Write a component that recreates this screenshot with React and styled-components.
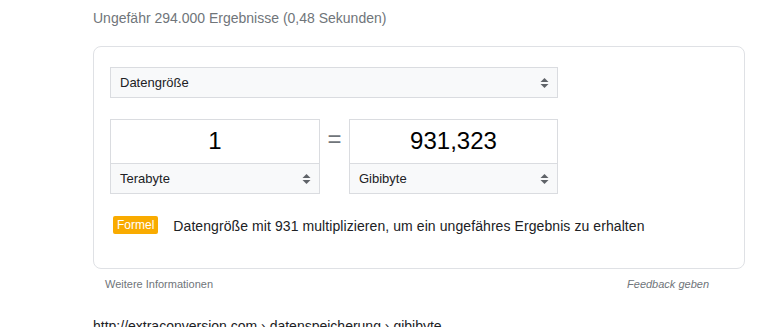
import styled, { createGlobalStyle } from "styled-components";

const Global = createGlobalStyle`
  body {
    margin: 0;
    background: #fff;
    font-family: Arial, "Liberation Sans", sans-serif;
    color: #202124;
  }
`;

const Page = styled.div`
  padding: 8px 0 0 93px;
  width: 652px;
`;

const Stats = styled.div`
  font-size: 14px;
  line-height: 20px;
  color: #70757a;
`;

const Card = styled.div`
  margin-top: 18px;
  border: 1px solid #dfe1e5;
  border-radius: 8px;
  padding: 20px 16px 35px 16px;
  height: 166px;
`;

const Select = styled.div`
  display: flex;
  align-items: center;
  justify-content: space-between;
  box-sizing: border-box;
  width: ${(p) => p.width || "100%"};
  height: ${(p) => p.height || "31px"};
  padding: 0 8px 0 9px;
  background: #f8f9fa;
  border: 1px solid #dadce0;
  font-size: 13px;
  color: #202124;
`;

const Arrows = () => (
  <svg width="9" height="12" viewBox="0 0 9 12">
    <path d="M0.5 5 L4.5 1 L8.5 5 Z" fill="#5f6368" />
    <path d="M0.5 7 L4.5 11 L8.5 7 Z" fill="#5f6368" />
  </svg>
);

const Row = styled.div`
  display: flex;
  align-items: flex-start;
  margin-top: 21px;
  width: 448px;
`;

const Unit = styled.div`
  display: flex;
  flex-direction: column;
  width: ${(p) => p.width};
`;

const Value = styled.div`
  box-sizing: border-box;
  height: 44px;
  border: 1px solid #dadce0;
  border-bottom: none;
  display: flex;
  align-items: center;
  justify-content: center;
  font-size: 24px;
  color: #000;
  padding-bottom: 1px;
`;

const Equals = styled.div`
  width: 29px;
  height: 44px;
  display: flex;
  align-items: center;
  justify-content: center;
  font-size: 24px;
  color: #70757a;
  padding-bottom: 4px;
  box-sizing: border-box;
`;

const Formula = styled.div`
  display: flex;
  align-items: center;
  margin-top: 21px;
  margin-left: 3px;
`;

const Badge = styled.span`
  background: #f9ab00;
  color: #fff;
  font-size: 12px;
  line-height: 18px;
  padding: 0 4px;
  border-radius: 2px;
  margin-right: 15px;
`;

const FormulaText = styled.span`
  font-size: 14px;
  letter-spacing: 0.08px;
  color: #202124;
  margin-top: 3px;
`;

const Footer = styled.div`
  display: flex;
  justify-content: space-between;
  padding: 8px 36px 0 12px;
  font-size: 11px;
  line-height: 14px;
  color: #70757a;
`;

const Feedback = styled.span`
  font-style: italic;
`;

const Url = styled.div`
  margin-top: 25px;
  font-size: 14px;
  line-height: 20px;
  color: #202124;
  white-space: nowrap;
`;

export default function App() {
  return (
    <>
      <Global />
      <Page>
        <Stats>Ungefähr 294.000 Ergebnisse (0,48 Sekunden)</Stats>
        <Card>
          <Select width="448px">
            <span>Datengröße</span>
            <Arrows />
          </Select>
          <Row>
            <Unit width="210px">
              <Value>1</Value>
              <Select>
                <span>Terabyte</span>
                <Arrows />
              </Select>
            </Unit>
            <Equals>=</Equals>
            <Unit width="209px">
              <Value>931,323</Value>
              <Select>
                <span>Gibibyte</span>
                <Arrows />
              </Select>
            </Unit>
          </Row>
          <Formula>
            <Badge>Formel</Badge>
            <FormulaText>
              Datengröße mit 931 multiplizieren, um ein ungefähres Ergebnis zu erhalten
            </FormulaText>
          </Formula>
        </Card>
        <Footer>
          <span>Weitere Informationen</span>
          <Feedback>Feedback geben</Feedback>
        </Footer>
        <Url>http://extraconversion.com › datenspeicherung › gibibyte</Url>
      </Page>
    </>
  );
}
